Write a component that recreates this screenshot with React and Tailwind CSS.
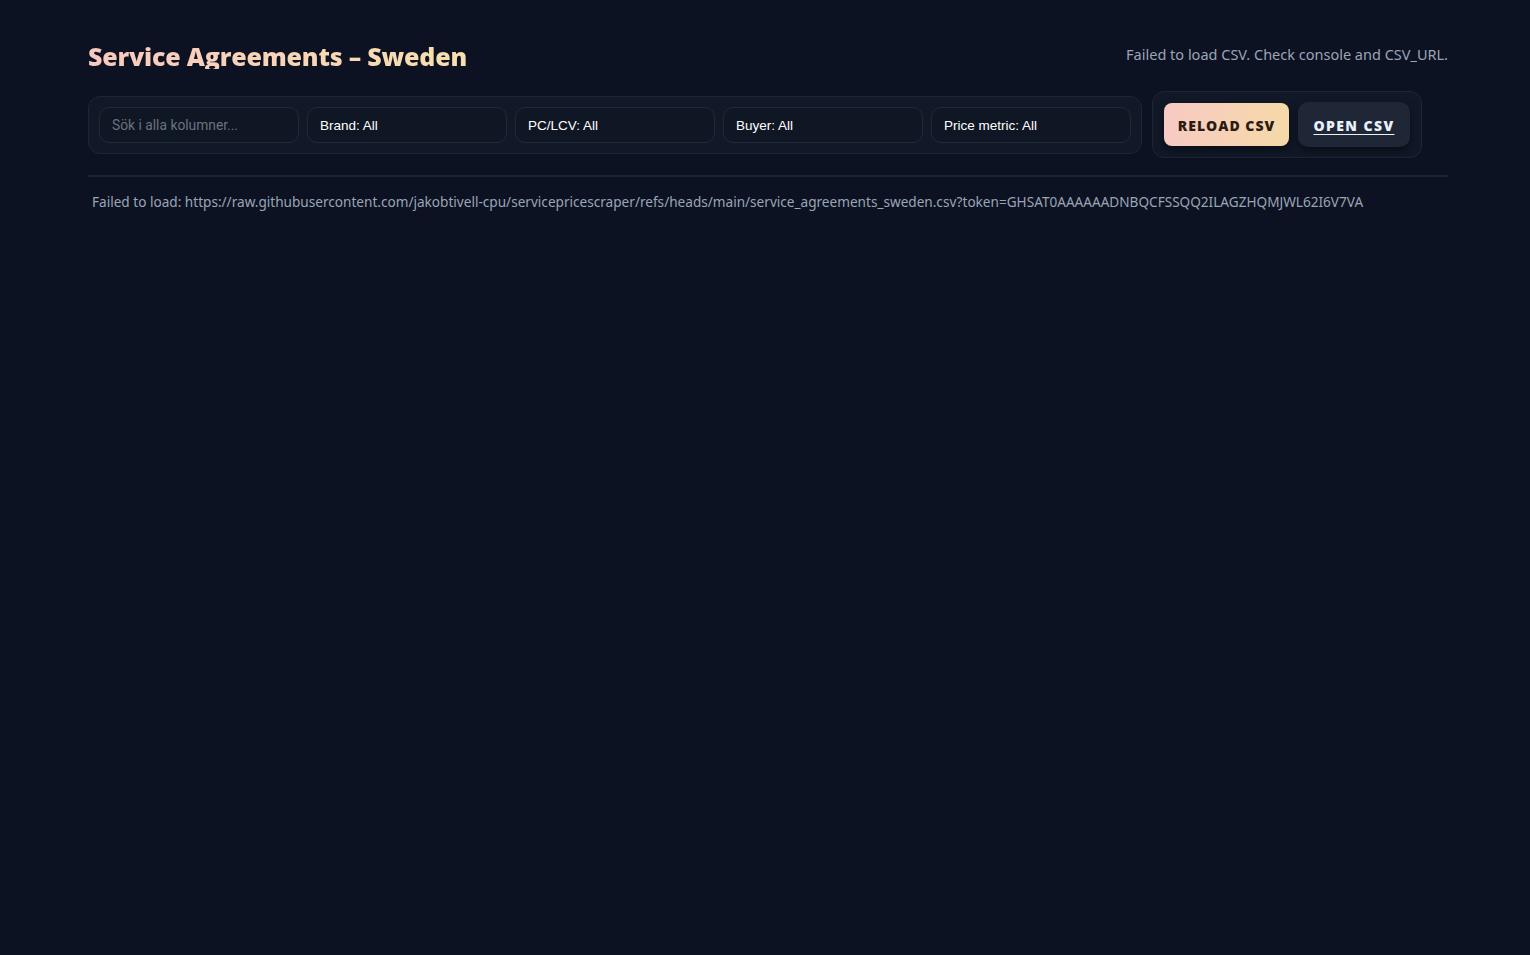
export default function App() {
  const filters = ["Brand: All", "PC/LCV: All", "Buyer: All", "Price metric: All"];
  return (
    <div className="min-h-[955px] w-full bg-[#0c1221] font-['Noto_Sans',sans-serif]">
      <div className="ml-[88px] w-[1360px] pt-[38px]">
        <div className="flex items-center justify-between h-[36px]">
          <h1 className="text-[25px] font-extrabold leading-none bg-gradient-to-r from-[#f8c9c0] to-[#f7dfae] bg-clip-text text-transparent font-['Open_Sans',sans-serif] tracking-[-0.2px]">
            Service Agreements – Sweden
          </h1>
          <div className="text-[14.5px] text-[#9aa5b8] -mt-[2px]">Failed to load CSV. Check console and CSV_URL.</div>
        </div>
        <div className="mt-[17px] flex items-center gap-[10px]">
          <div className="flex gap-[8px] rounded-[12px] border border-[#1e2536] bg-[#111827] p-[10px]">
            <input
              placeholder="Sök i alla kolumner..."
              className="h-[36px] w-[200px] rounded-[10px] border border-[#222a3a] bg-[#0f1624] px-[12px] text-[13.8px] text-[#e5e7eb] placeholder:text-[#6b7280] font-['Roboto',sans-serif] outline-none"
            />
            {filters.map((f) => (
              <div
                key={f}
                className="flex h-[36px] w-[200px] items-center rounded-[10px] border border-[#222a3a] bg-[#0f1624] px-[12px] pt-[3px] text-[13.5px] text-white font-['Liberation_Sans',sans-serif]"
              >
                {f}
              </div>
            ))}
          </div>
          <div className="flex items-center gap-[9px] rounded-[12px] border border-[#1e2536] bg-[#111827] px-[11px] py-[10px]">
            <button className="h-[43px] w-[125px] rounded-[8px] bg-gradient-to-r from-[#f7cac3] to-[#f6d9a8] pt-[1px] text-[14px] font-extrabold tracking-[1px] text-[#2a1b12] shadow-[0_4px_10px_rgba(0,0,0,0.45)] font-['Open_Sans',sans-serif]">
              RELOAD CSV
            </button>
            <button className="h-[45px] w-[112px] rounded-[10px] bg-[#1f2636] pt-[1px] text-[14px] font-extrabold tracking-[1.4px] text-[#e8f0fb] underline underline-offset-[3px] shadow-[0_4px_10px_rgba(0,0,0,0.45)] font-['Open_Sans',sans-serif]">
              OPEN CSV
            </button>
          </div>
        </div>
        <div className="mt-[17px] border-t-2 border-[#1c2332]" />
        <div className="mt-[15px] pl-[4px] text-[13.6px] text-[#9aa5b8]">
          Failed to load: https://raw.githubusercontent.com/jakobtivell-cpu/servicepricescraper/refs/heads/main/service_agreements_sweden.csv?token=GHSAT0AAAAAADNBQCFSSQQ2ILAGZHQMJWL62I6V7VA
        </div>
      </div>
    </div>
  );
}
